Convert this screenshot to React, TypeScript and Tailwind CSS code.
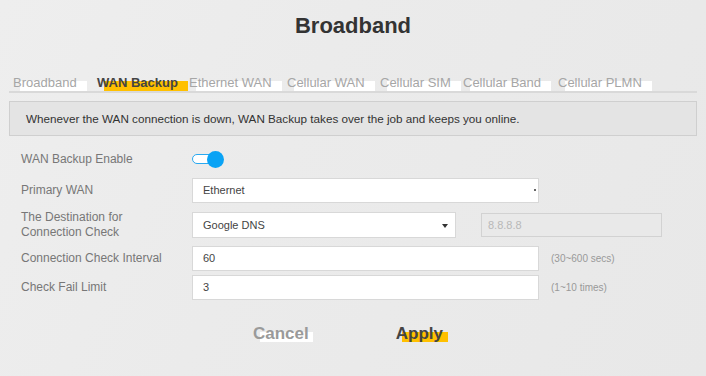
import React from "react";

const font = { fontFamily: '"Liberation Sans", Arial, sans-serif' };

function Tab({ label, active, w }: { label: string; active?: boolean; w: string }) {
  return (
    <span className={"inline-block whitespace-nowrap " + w}>
      <span className="relative inline-block">
        <span
          className={
            "absolute left-[7px] right-[-10px] top-[6px] h-[10px] " +
            (active ? "bg-[#ffc000]" : "bg-white")
          }
        />
        <span
          className={
            "relative " + (active ? "font-bold text-[#444]" : "text-[#a6a6a6]")
          }
        >
          {label}
        </span>
      </span>
    </span>
  );
}

function Row({
  label,
  children,
  className = "",
}: {
  label: React.ReactNode;
  children: React.ReactNode;
  className?: string;
}) {
  return (
    <div className={"flex items-center " + className}>
      <div className="w-[171px] shrink-0 text-[12px] leading-[15px] text-[#777]">{label}</div>
      <div className="flex items-center">{children}</div>
    </div>
  );
}

export default function App() {
  return (
    <div
      className="w-[706px] h-[376px] overflow-hidden bg-[linear-gradient(115deg,#eeeeee_0%,#ebebeb_40%,#e8e8e8_100%)]"
      style={font}
    >
      <div className="pt-[13px] text-center text-[22px] leading-[26px] font-bold text-[#333]">
        Broadband
      </div>

      <div className="mx-[9px] mt-[36px] border-b-2 border-[#d9d9d9] pl-[4px] flex text-[13px] leading-[16px]">
        <Tab label="Broadband" w="w-[84px]" />
        <Tab label="WAN Backup" active w="w-[92px]" />
        <Tab label="Ethernet WAN" w="w-[98px]" />
        <Tab label="Cellular WAN" w="w-[93px]" />
        <Tab label="Cellular SIM" w="w-[83px]" />
        <Tab label="Cellular Band" w="w-[95px]" />
        <Tab label="Cellular PLMN" w="w-[90px]" />
      </div>

      <div className="mx-[9px] mt-[8px] h-[35px] border border-[#cfcfcf] bg-[#e4e4e4] flex items-center pl-[16px] text-[11.7px] text-[#333]">
        Whenever the WAN connection is down, WAN Backup takes over the job and keeps you online.
      </div>

      <div className="pl-[21px] mt-[14px] flex flex-col">
        <Row label="WAN Backup Enable" className="h-[18px]">
          <div className="relative w-[32px] h-[17px] flex items-center">
            <div className="w-[26px] h-[10px] rounded-full border border-[#29a9f0] bg-white" />
            <div className="absolute right-0 top-0 w-[17px] h-[17px] rounded-full bg-[#0aa3f5]" />
          </div>
        </Row>

        <Row label="Primary WAN" className="mt-[10px] h-[25px]">
          <div className="relative w-[347px] h-[25px] bg-white border border-[#d8d8d8] flex items-center pl-[10px] text-[11px] text-[#444]">
            Ethernet
            <span className="absolute right-[2px] top-[10px] w-[2px] h-[2px] bg-[#666]" />
          </div>
        </Row>

        <Row
          label={
            <>
              The Destination for
              <br />
              Connection Check
            </>
          }
          className="mt-[9px] h-[26px]"
        >
          <div className="relative w-[264px] h-[26px] bg-white border border-[#d8d8d8] flex items-center pl-[10px] text-[11px] text-[#444]">
            Google DNS
            <svg className="absolute right-[7px] top-[11px]" width="6" height="4" viewBox="0 0 6 4">
              <path d="M0 0H6L3 4Z" fill="#333" />
            </svg>
          </div>
          <div className="ml-[25px] w-[181px] h-[24px] bg-[#e9e9e9] border border-[#d2d2d2] flex items-center pl-[6px] text-[11px] text-[#b8b8b8]">
            8.8.8.8
          </div>
        </Row>

        <Row label="Connection Check Interval" className="mt-[8px] h-[25px]">
          <div className="w-[347px] h-[25px] bg-white border border-[#d8d8d8] flex items-center pl-[10px] text-[11px] text-[#444]">
            60
          </div>
          <span className="ml-[12px] text-[10px] text-[#999]">(30~600 secs)</span>
        </Row>

        <Row label="Check Fail Limit" className="mt-[4px] h-[25px]">
          <div className="w-[347px] h-[25px] bg-white border border-[#d8d8d8] flex items-center pl-[10px] text-[11px] text-[#444]">
            3
          </div>
          <span className="ml-[12px] text-[10px] text-[#999]">(1~10 times)</span>
        </Row>
      </div>

      <div className="mt-[22px] flex pl-[253px] gap-[87px]">
        <span className="relative inline-block">
          <span className="absolute left-[7px] right-[-4px] top-[10px] h-[10px] bg-white" />
          <span className="relative text-[17px] leading-[20px] font-bold text-[#9a9a9a]">Cancel</span>
        </span>
        <span className="relative inline-block">
          <span className="absolute left-[6px] right-[-5px] top-[10px] h-[10px] bg-[#ffc000]" />
          <span className="relative text-[17px] leading-[20px] font-bold text-[#444]">Apply</span>
        </span>
      </div>
    </div>
  );
}
